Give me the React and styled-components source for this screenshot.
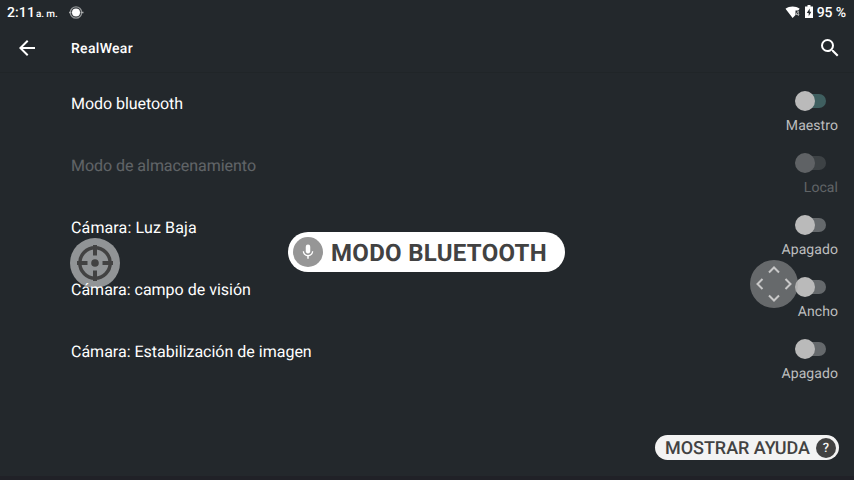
import React from "react";
import styled, { createGlobalStyle } from "styled-components";

const Global = createGlobalStyle`
  * { box-sizing: border-box; }
  body { margin: 0; background: #23282c; }
`;

const Screen = styled.div`
  position: relative;
  display: flex;
  flex-direction: column;
  width: 854px;
  height: 480px;
  overflow: hidden;
  background: #23282c;
  border-bottom: 4px solid #202127;
  color: #fff;
  font-family: Roboto, "Noto Sans", sans-serif;
  text-rendering: geometricPrecision;
`;

const StatusBar = styled.div`
  display: flex;
  align-items: center;
  height: 24px;
  padding: 1px 8px 0 7px;
  font-size: 14px;
  font-weight: 500;
  white-space: nowrap;
`;

const Clock = styled.span`
  display: flex;
  align-items: baseline;
  width: 62px;
  letter-spacing: 0.1px;
`;

const Meridiem = styled.span`
  margin-left: 1px;
  font-size: 10px;
  letter-spacing: -0.1px;
`;

const StatusIcons = styled.div`
  display: flex;
  align-items: center;
  margin-left: auto;
`;

const Battery = styled.span`
  letter-spacing: -0.1px;
`;

const Icon = styled.svg`
  display: block;
  flex: none;
  margin: ${(p) => p.$margin || 0};
`;

const Toolbar = styled.header`
  display: flex;
  align-items: center;
  height: 49px;
  padding: 0 12px 1px 15px;
  border-bottom: 1px solid #202528;
`;

const Title = styled.h1`
  flex: 1;
  margin: 2px 0 0 32px;
  font-size: 14px;
  font-weight: 500;
  letter-spacing: 0.3px;
`;

const List = styled.main`
  display: flex;
  flex-direction: column;
`;

const Row = styled.div`
  display: flex;
  align-items: flex-start;
  justify-content: space-between;
  height: 62px;
  padding: 18px 16px 0 71px;
`;

const Label = styled.span`
  margin-top: 3px;
  font-size: 16px;
  line-height: 20px;
  letter-spacing: ${(p) => p.$tracking || 0}px;
  opacity: ${(p) => (p.$disabled ? 0.28 : 1)};
`;

const Control = styled.div`
  display: flex;
  flex-direction: column;
  align-items: flex-end;
  gap: 7px;
  opacity: ${(p) => (p.$disabled ? 0.4 : 1)};
`;

const Track = styled.div`
  display: flex;
  align-items: center;
  width: 30px;
  height: 14px;
  margin: 3px 12px;
  border-radius: 7px;
  background: ${(p) => (p.$on ? "#3f5f60" : "#65696c")};
`;

const Thumb = styled.div`
  flex: none;
  width: 20px;
  height: 20px;
  margin-left: -1px;
  border-radius: 50%;
  background: #bababa;
`;

const Value = styled.span`
  color: #bdbebf;
  font-size: 14px;
  line-height: 16px;
  letter-spacing: 0.07px;
`;

const Pill = styled.div`
  position: absolute;
  display: flex;
  align-items: center;
  color: #424242;
  white-space: nowrap;
`;

const VoicePill = styled(Pill)`
  left: 288px;
  top: 232px;
  width: 277px;
  height: 40px;
  padding-left: 5px;
  gap: 8px;
  border-radius: 20px;
  background: #fff;
  font-size: 24px;
  font-weight: 700;
`;

const Command = styled.span`
  margin-top: 2px;
  letter-spacing: 0.3px;
`;

const HelpPill = styled(Pill)`
  left: 655px;
  top: 435px;
  width: 184px;
  height: 25px;
  padding: 1px 3px 0 10px;
  justify-content: space-between;
  border-radius: 13px;
  background: #f3f3f3;
  font-size: 18px;
  font-weight: 500;
`;

const HelpText = styled.span`
  margin-top: 1px;
  letter-spacing: -0.04px;
`;

const Disc = styled.span`
  display: flex;
  align-items: center;
  justify-content: center;
  flex: none;
  width: ${(p) => p.$size}px;
  height: ${(p) => p.$size}px;
  border-radius: 50%;
  background: ${(p) => p.$fill};
  color: #f3f3f3;
  font-size: 13px;
  font-weight: 500;
`;

const Floating = styled.div`
  position: absolute;
  left: ${(p) => p.$x}px;
  top: ${(p) => p.$y}px;
`;

const rows = [
  { label: "Modo bluetooth", value: "Maestro", on: true, tracking: -0.05 },
  { label: "Modo de almacenamiento", value: "Local", disabled: true, tracking: -0.04 },
  { label: "Cámara: Luz Baja", value: "Apagado", tracking: 0.13 },
  { label: "Cámara: campo de visión", value: "Ancho" },
  { label: "Cámara: Estabilización de imagen", value: "Apagado" },
];

function Setting({ label, value, on, disabled, tracking }) {
  return (
    <Row>
      <Label $disabled={disabled} $tracking={tracking}>
        {label}
      </Label>
      <Control $disabled={disabled}>
        <Track $on={on}>
          <Thumb />
        </Track>
        <Value>{value}</Value>
      </Control>
    </Row>
  );
}

export default function App() {
  return (
    <>
      <Global />
      <Screen>
        <StatusBar>
          <Clock>
            2:11<Meridiem>a. m.</Meridiem>
          </Clock>
          <Icon width="15" height="15" viewBox="0 0 15 15" $margin="-1px 0 0">
            <circle cx="7" cy="7.5" r="5.700" fill="none" stroke="#8f9294" strokeWidth="1.300" />
            <path d="M0 7.5h2.500M11.500 7.5H14.500" stroke="#a8aaab" strokeWidth="1.5" />
            <circle cx="7" cy="7.5" r="4" fill="#fff" />
          </Icon>
          <StatusIcons>
            <Icon width="16" height="13" viewBox="0 0 16 13" $margin="-1px 4px 0 0">
              <path d="M.5 2.7C4.6-.3 10.600-.3 14.700 2.700L13.200 4.500H10.500V9L7.600 12z" fill="#fff" />
              <path d="M13.300 10V5L10.800 8.500H14.300" fill="none" stroke="#a8aaab" strokeWidth="1" />
            </Icon>
            <Icon width="8" height="14" viewBox="0 0 8 14" $margin="-2px 4px 0 0">
              <path d="M2.500 0h3v1.500H8V13H0V1.500h2.500z" fill="#fff" />
              <path d="M4.700 3.500L1.800 8h1.900v3.200L6.300 6.700H4.700z" fill="#23282c" />
            </Icon>
            <Battery>95 %</Battery>
          </StatusIcons>
        </StatusBar>
        <Toolbar>
          <Icon width="24" height="24" viewBox="0 0 24 24">
            <path d="M20 11H7.830l5.590-5.590L12 4l-8 8 8 8 1.410-1.410L7.830 13H20z" fill="#fff" />
          </Icon>
          <Title>RealWear</Title>
          <Icon width="24" height="24" viewBox="0 0 24 24">
            <path
              d="M15.500 14h-.79l-.28-.27A6.471 6.471 0 0 0 16 9.500 6.500 6.500 0 1 0 9.500 16c1.610 0 3.090-.59 4.230-1.570l.27.28v.79l5 4.990L20.490 19zm-6 0a4.500 4.500 0 1 1 0-9 4.500 4.500 0 0 1 0 9z"
              fill="#fff"
            />
          </Icon>
        </Toolbar>
        <List>
          {rows.map((row) => (
            <Setting key={row.label} {...row} />
          ))}
        </List>

        <Floating $x={70} $y={238}>
          <Icon width="50" height="50" viewBox="0 0 50 50">
            <circle cx="25" cy="25" r="25" fill="#fff" fillOpacity="0.5" />
            <g fill="none" stroke="#424242" strokeWidth="3.500">
              <circle cx="25" cy="25" r="15.200" />
              <path d="M25 7v10.500M25 32.500V43M7 25h10.500M32.500 25H43" strokeWidth="4" />
            </g>
            <circle cx="25" cy="25" r="3.800" fill="#424242" />
          </Icon>
        </Floating>
        <Floating $x={750} $y={260}>
          <Icon width="48" height="48" viewBox="0 0 48 48">
            <circle cx="24" cy="24" r="24" fill="#a9a9a9" fillOpacity="0.5" />
            <path
              d="M19 12.500l5-5 5 5M19 35.500l5 5 5-5M12.500 19l-5 5 5 5M35.500 19l5 5-5 5"
              fill="none"
              stroke="#c8c8c8"
              strokeWidth="2"
            />
          </Icon>
        </Floating>

        <VoicePill>
          <Disc $size={30} $fill="#969696">
            <Icon width="18" height="18" viewBox="0 0 24 24">
              <path
                d="M12 14c1.660 0 3-1.340 3-3V5a3 3 0 0 0-6 0v6c0 1.660 1.340 3 3 3zm5.300-3c0 3-2.540 5.100-5.300 5.100S6.700 14 6.700 11H5c0 3.410 2.720 6.230 6 6.720V21h2v-3.280c3.280-.49 6-3.310 6-6.720z"
                fill="#fff"
              />
            </Icon>
          </Disc>
          <Command>MODO BLUETOOTH</Command>
        </VoicePill>
        <HelpPill>
          <HelpText>MOSTRAR AYUDA</HelpText>
          <Disc $size={20} $fill="#424242">?</Disc>
        </HelpPill>
      </Screen>
    </>
  );
}
